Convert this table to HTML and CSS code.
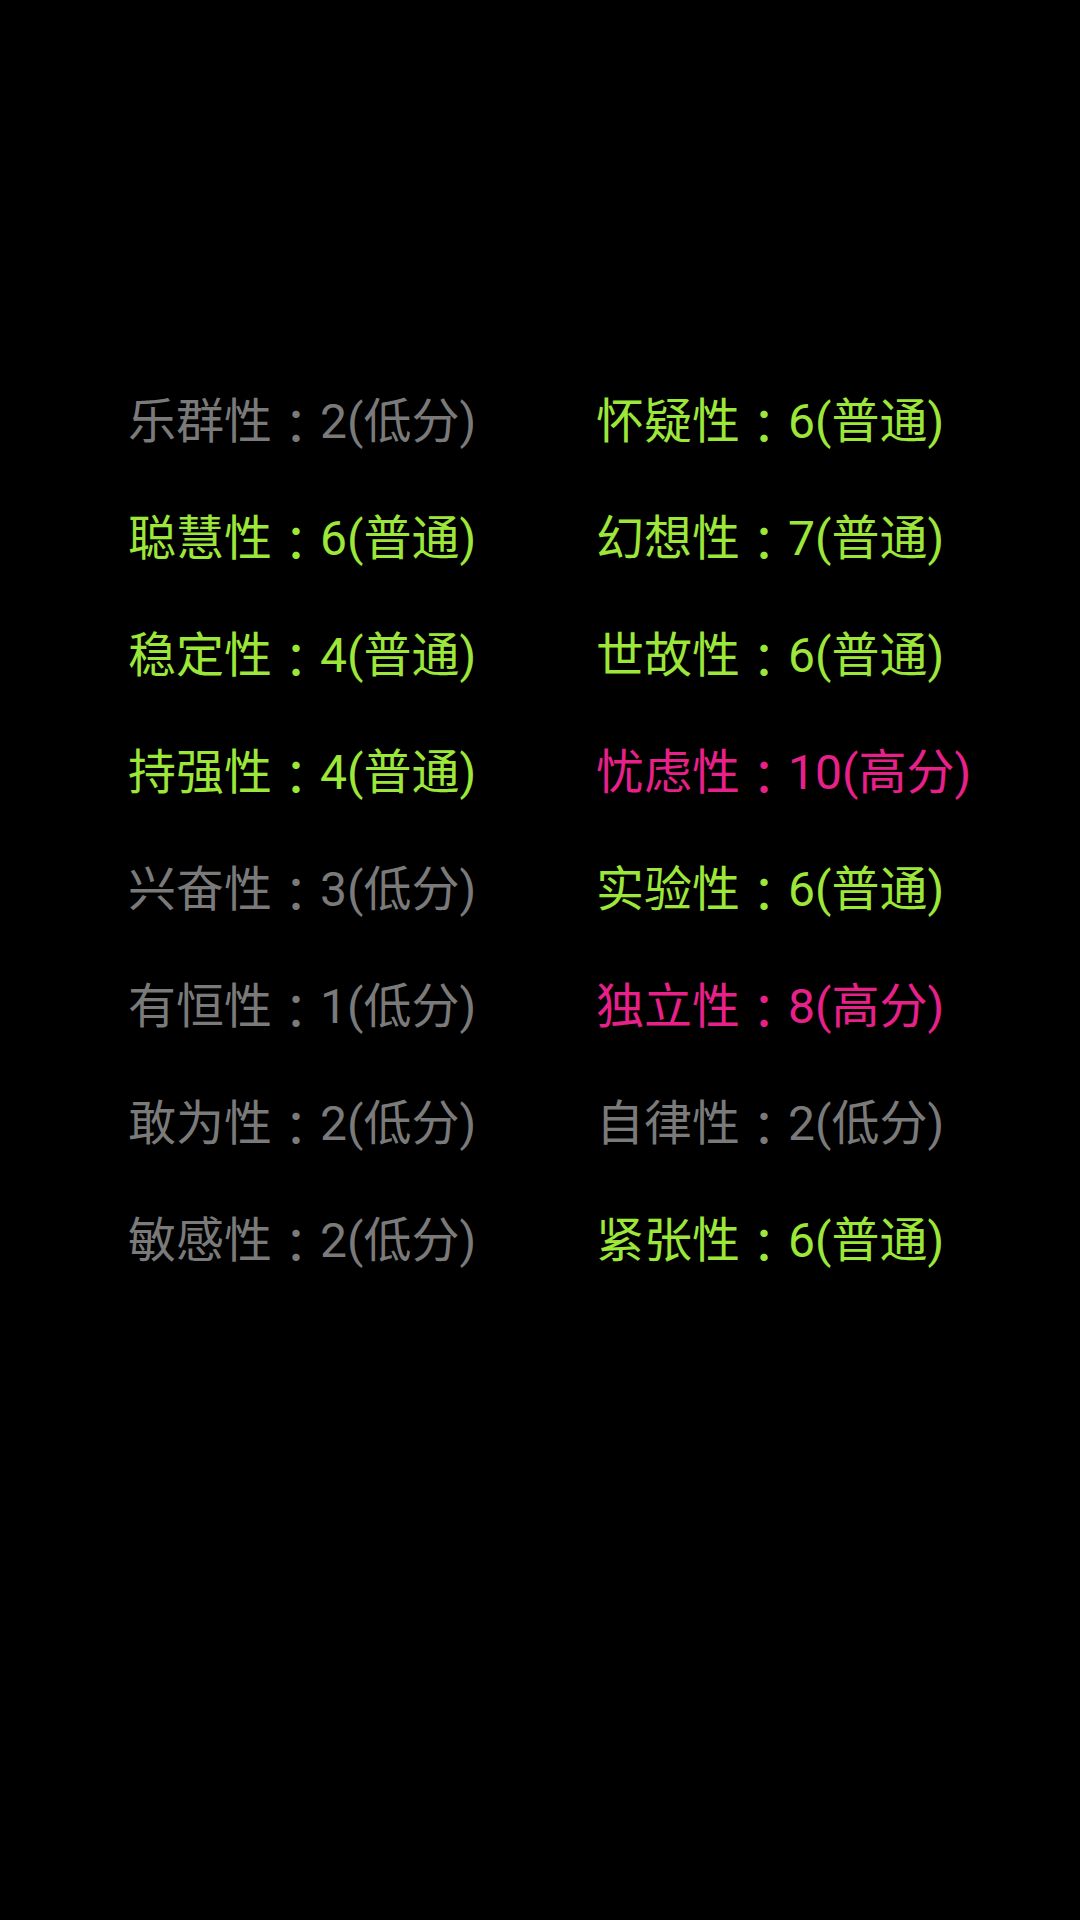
FILE: index.html
```html
<!DOCTYPE html>
<html lang="zh-CN">
<head>
<meta charset="utf-8">
<link rel="stylesheet" href="styles.css">
</head>
<body>
<main class="screen">
  <div class="grid">
    <div class="item low">乐群性<span class="colon" lang="ja">：</span>2(低分)</div>
    <div class="item mid">怀疑性<span class="colon" lang="ja">：</span>6(普通)</div>
    <div class="item mid">聪慧性<span class="colon" lang="ja">：</span>6(普通)</div>
    <div class="item mid">幻想性<span class="colon" lang="ja">：</span>7(普通)</div>
    <div class="item mid">稳定性<span class="colon" lang="ja">：</span>4(普通)</div>
    <div class="item mid">世故性<span class="colon" lang="ja">：</span>6(普通)</div>
    <div class="item mid">持强性<span class="colon" lang="ja">：</span>4(普通)</div>
    <div class="item high">忧虑性<span class="colon" lang="ja">：</span>10(高分)</div>
    <div class="item low">兴奋性<span class="colon" lang="ja">：</span>3(低分)</div>
    <div class="item mid">实验性<span class="colon" lang="ja">：</span>6(普通)</div>
    <div class="item low">有恒性<span class="colon" lang="ja">：</span>1(低分)</div>
    <div class="item high">独立性<span class="colon" lang="ja">：</span>8(高分)</div>
    <div class="item low">敢为性<span class="colon" lang="ja">：</span>2(低分)</div>
    <div class="item low">自律性<span class="colon" lang="ja">：</span>2(低分)</div>
    <div class="item low">敏感性<span class="colon" lang="ja">：</span>2(低分)</div>
    <div class="item mid">紧张性<span class="colon" lang="ja">：</span>6(普通)</div>
  </div>
</main>
</body>
</html>
```

FILE: styles.css
```css
html, body {
  margin: 0;
  padding: 0;
  background: #000;
}
.screen {
  width: 1080px;
  height: 1920px;
  background: #000;
  box-sizing: border-box;
  padding-top: 363px;
  padding-left: 128px;
}
.grid {
  display: grid;
  grid-template-columns: 468px auto;
  grid-auto-rows: 117px;
}
.item {
  font-family: Roboto, "Noto Sans CJK SC", sans-serif;
  font-size: 48px;
  line-height: 117px;
  white-space: nowrap;
}
.colon {
  font-family: "Noto Sans CJK JP", "Noto Sans CJK SC", sans-serif;
  line-height: 1;
  vertical-align: -6px;
}
.low { color: #7a7a7a; }
.mid { color: #9de63a; }
.high { color: #e8208a; }
```
